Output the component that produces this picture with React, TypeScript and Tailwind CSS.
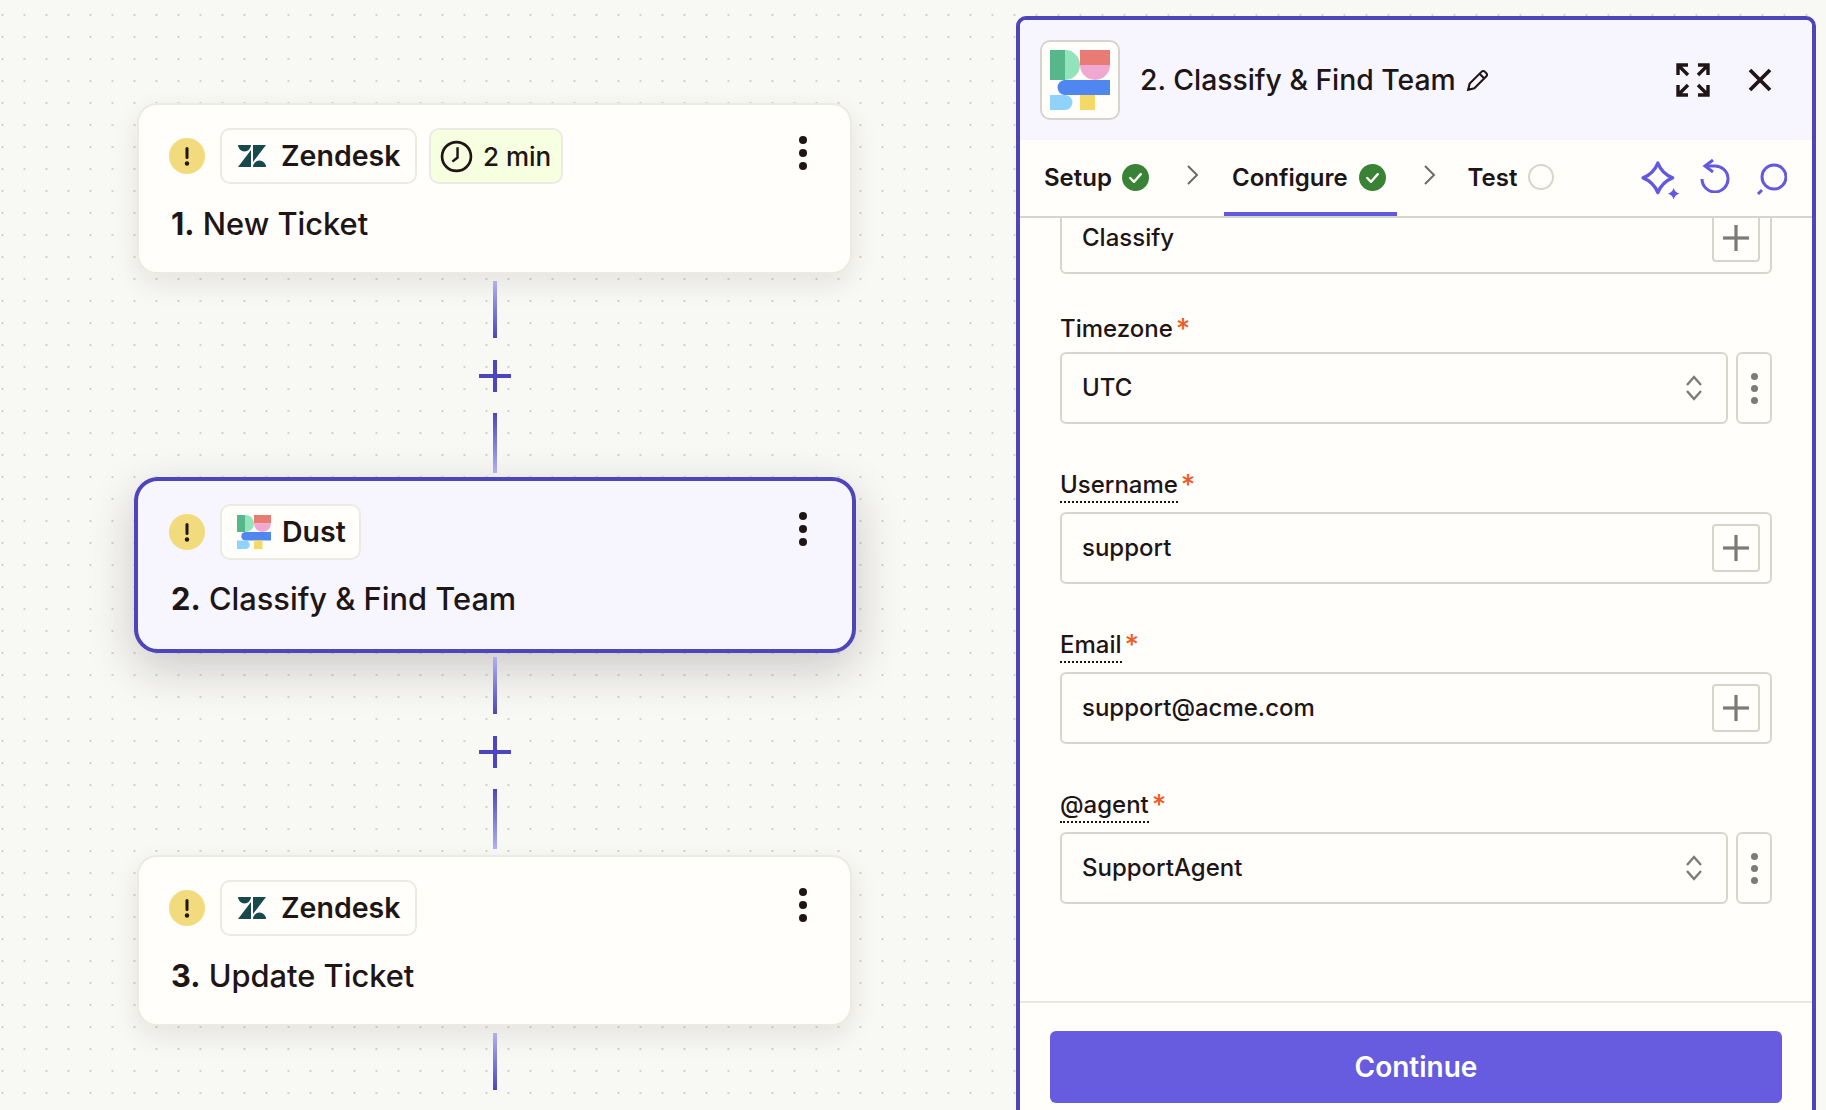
import { FC, ReactNode } from "react";

const DustLogo: FC<{ className?: string }> = ({ className }) => (
  <svg viewBox="0 0 4 4" className={className}>
    <rect x="0" y="0" width="1" height="2" fill="#56b88a" />
    <path d="M1 0a1 1 0 0 1 0 2z" fill="#92e4bb" />
    <rect x="2" y="0" width="2" height="1" fill="#e97b75" />
    <path d="M2 1h2a1 1 0 0 1-2 0z" fill="#efa9d0" />
    <path d="M1 2h3v1H1a.5.5 0 0 1 0-1z" fill="#4f86ef" />
    <path d="M0 3h1a.5.5 0 0 1 0 1H0z" fill="#8fd2fa" />
    <rect x="2" y="3" width="1" height="1" fill="#f6d867" />
  </svg>
);

const ZendeskLogo: FC = () => (
  <svg viewBox="0 0 28 22" className="h-[22px] w-[28px]" fill="#17494d">
    <path d="M0 0h13a6.5 6.5 0 0 1-13 0z" />
    <path d="M13 5v17H0z" />
    <path d="M15 17V0h13z" />
    <path d="M28 22H15a6.5 6.5 0 0 1 13 0z" />
  </svg>
);

const Warning: FC = () => (
  <div className="flex h-[36px] w-[36px] shrink-0 items-center justify-center rounded-full bg-[#f2db7c]">
    <svg viewBox="0 0 36 36" className="h-[36px] w-[36px]" fill="#201515">
      <rect x="16.5" y="9" width="3" height="12" rx="1.5" />
      <circle cx="18" cy="25.5" r="2.2" />
    </svg>
  </div>
);

const Chip: FC<{ children: ReactNode; className?: string }> = ({
  children,
  className,
}) => (
  <div
    className={`flex h-[56px] items-center rounded-[10px] border-2 border-[#ecebe3] ${className}`}
  >
    {children}
  </div>
);

const Clock: FC = () => (
  <svg
    viewBox="0 0 32 32"
    className="h-[33px] w-[33px]"
    fill="none"
    stroke="#201515"
    strokeWidth="2.6"
  >
    <circle cx="16" cy="16" r="14" />
    <path d="M17 7v10l-5 4" strokeWidth="2.4" />
  </svg>
);

const StepCard: FC<{
  number: string;
  title: string;
  app: ReactNode;
  selected?: boolean;
  extra?: ReactNode;
}> = ({ number, title, app, selected, extra }) => (
  <div
    className={
      selected
        ? "relative z-10 -mt-[3px] -mr-[4px] -mb-[4px] -ml-[3px] h-[176px] rounded-[24px] border-[4px] border-[#4f45bb] bg-[#f7f6fe] pt-[23px] pr-[32px] pl-[31px] shadow-[0_16px_48px_rgba(32,21,21,0.2)]"
        : "relative z-10 -my-[1px] h-[171px] rounded-[20px] border-2 border-[#ecebe3] bg-[#fffefb] pt-[23px] pr-[30px] pl-[30px] shadow-[0_10px_28px_rgba(32,21,21,0.09)]"
    }
  >
    <div className="flex items-center">
      <Warning />
      <div className="ml-[15px] flex items-center gap-[12px]">
        {app}
        {extra}
      </div>
      <div className="mt-[-6px] mr-[13px] ml-auto flex flex-col items-center gap-[5px]">
        <span className="h-[8px] w-[8px] rounded-full bg-[#201515]" />
        <span className="h-[8px] w-[8px] rounded-full bg-[#201515]" />
        <span className="h-[8px] w-[8px] rounded-full bg-[#201515]" />
      </div>
    </div>
    <div
      className={`ml-[2px] text-[30.8px] leading-[38px] font-medium text-[#201515] ${
        selected ? "mt-[20px]" : "mt-[21px]"
      }`}
    >
      <span className="font-bold">{number}</span> {title}
    </div>
  </div>
);

const Connector: FC<{ halo?: boolean }> = ({ halo }) => (
  <div className="relative z-20 flex h-[207px] flex-col items-center pt-[8px]">
    <div className="h-[57px] w-[4px] bg-linear-to-t from-[#4f45bb] to-[#b4aff0]" />
    <div className="relative mt-[22px] mb-[21px] h-[32px] w-[32px] shrink-0">
      {halo && (
        <div className="absolute -top-[14px] -left-[14px] h-[60px] w-[60px] rounded-full bg-[#f8f8f5]" />
      )}
      <div className="absolute top-[14px] left-0 h-[4px] w-[32px] bg-[#4f45bb]" />
      <div className="absolute top-0 left-[14px] h-[32px] w-[4px] bg-[#4f45bb]" />
    </div>
    <div className="h-[60px] w-[4px] bg-linear-to-b from-[#4f45bb] to-[#b4aff0]" />
  </div>
);

const CheckDot: FC = () => (
  <svg viewBox="0 0 28 28" className="h-[27px] w-[27px]">
    <circle cx="14" cy="14" r="14" fill="#3a8336" />
    <path
      d="M8.5 14.5l4 4 7-8"
      fill="none"
      stroke="#fffefb"
      strokeWidth="2.4"
      strokeLinecap="round"
      strokeLinejoin="round"
    />
  </svg>
);

const Chevron: FC = () => (
  <svg
    viewBox="0 0 14 22"
    className="h-[22px] w-[14px]"
    fill="none"
    stroke="#6b6b68"
    strokeWidth="2"
  >
    <path d="M2 2l9 9-9 9" />
  </svg>
);

const PlusBox: FC = () => (
  <div className="flex h-[48px] w-[48px] shrink-0 items-center justify-center rounded-[4px] border-2 border-[#d7d6cc] bg-[#fffefb]">
    <svg viewBox="0 0 24 24" className="h-[26px] w-[26px]" fill="#7c7b78">
      <rect x="0" y="10.5" width="24" height="3" />
      <rect x="10.5" y="0" width="3" height="24" />
    </svg>
  </div>
);

const Label: FC<{ text: string; dotted?: boolean }> = ({ text, dotted }) => (
  <div className="flex items-start text-[24px] leading-[30px] font-medium text-[#201515]">
    <span
      className={
        dotted ? "border-b-2 border-dotted border-[#201515] pb-[1px]" : ""
      }
    >
      {text}
    </span>
    <span className="ml-[3px] text-[28px] text-[#f15a24]">*</span>
  </div>
);

const TextField: FC<{ value: string; className?: string }> = ({
  value,
  className,
}) => (
  <div
    className={`flex h-[72px] items-center rounded-[6px] border-2 border-[#d7d6cc] bg-[#fffefb] pr-[10px] pl-[20px] text-[24px] font-medium text-[#201515] ${className}`}
  >
    <span>{value}</span>
    <div className="ml-auto">
      <PlusBox />
    </div>
  </div>
);

const SelectField: FC<{ value: string }> = ({ value }) => (
  <div className="flex gap-[8px]">
    <div className="flex h-[72px] w-[668px] items-center rounded-[6px] border-2 border-[#d7d6cc] bg-[#fffefb] pr-[23px] pl-[20px] text-[24px] font-medium text-[#201515]">
      <span>{value}</span>
      <svg
        viewBox="0 0 18 26"
        className="ml-auto h-[26px] w-[18px]"
        fill="none"
        stroke="#7c7b78"
        strokeWidth="2.4"
      >
        <path d="M2 10l7-8 7 8" />
        <path d="M2 16l7 8 7-8" />
      </svg>
    </div>
    <div className="flex h-[72px] w-[36px] flex-col items-center justify-center gap-[5px] rounded-[6px] border-2 border-[#d7d6cc] bg-[#fffefb]">
      <span className="h-[7px] w-[7px] rounded-full bg-[#7c7b78]" />
      <span className="h-[7px] w-[7px] rounded-full bg-[#7c7b78]" />
      <span className="h-[7px] w-[7px] rounded-full bg-[#7c7b78]" />
    </div>
  </div>
);

const ZendeskChip: FC = () => (
  <Chip className="w-[197px] gap-[15px] bg-[#fffefb] pl-[16px]">
    <ZendeskLogo />
    <span className="text-[28.5px] font-semibold text-[#201515]">Zendesk</span>
  </Chip>
);

export default function App() {
  return (
    <div className="flex h-[1110px] w-[1826px] overflow-hidden bg-[#f8f8f5] bg-[radial-gradient(#d3d3cc_1px,transparent_1.5px)] bg-[size:22px_22px] bg-[position:-8.5px_4px] font-[Inter,sans-serif]">
      <div className="w-[1016px] shrink-0 pt-[104px] pl-[137px]">
        <div className="w-[715px]">
          <StepCard
            number="1."
            title="New Ticket"
            app={<ZendeskChip />}
            extra={
              <Chip className="w-[134px] gap-[10px] bg-[#f6ffdf] pl-[9px]">
                <Clock />
                <span className="text-[26px] font-medium text-[#201515]">
                  2 min
                </span>
              </Chip>
            }
          />
          <Connector />
          <StepCard
            selected
            number="2."
            title="Classify & Find Team"
            app={
              <Chip className="w-[141px] gap-[11px] bg-[#fffefb] pl-[15px]">
                <DustLogo className="h-[34px] w-[34px]" />
                <span className="text-[28.5px] font-semibold text-[#201515]">
                  Dust
                </span>
              </Chip>
            }
          />
          <Connector halo />
          <StepCard number="3." title="Update Ticket" app={<ZendeskChip />} />
          <Connector />
        </div>
      </div>

      <div className="mt-[16px] flex h-[1110px] w-[800px] shrink-0 flex-col overflow-hidden rounded-t-[10px] border-[4px] border-b-0 border-[#4f45bb] bg-[#fffefb]">
        <div className="flex h-[120px] shrink-0 items-center bg-[#f7f6fe] pr-[40px] pl-[20px]">
          <div className="flex h-[80px] w-[80px] items-center justify-center rounded-[10px] border-2 border-[#d7d6cc] bg-[#fffefb]">
            <DustLogo className="h-[60px] w-[60px]" />
          </div>
          <span className="ml-[20px] text-[28.3px] font-medium text-[#201515]">
            2. Classify &amp; Find Team
          </span>
          <svg
            viewBox="0 0 24 24"
            className="ml-[9px] h-[25px] w-[25px]"
            fill="none"
            stroke="#201515"
            strokeWidth="2"
          >
            <path d="M3 21l1.5-6L16 3.5a2 2 0 0 1 3 0l1.5 1.5a2 2 0 0 1 0 3L9 19.5z" />
            <path d="M14 5.5l4.5 4.5" />
          </svg>
          <svg
            viewBox="0 0 34 34"
            className="ml-auto h-[34px] w-[34px]"
            fill="none"
            stroke="#201515"
            strokeWidth="3.4"
          >
            <path d="M2 12V2h10M2 2l10 10" />
            <path d="M32 12V2H22M32 2L22 12" />
            <path d="M2 22v10h10M2 32l10-10" />
            <path d="M32 22v10H22M32 32L22 22" />
          </svg>
          <svg
            viewBox="0 0 24 24"
            className="ml-[38px] h-[24px] w-[24px]"
            fill="none"
            stroke="#201515"
            strokeWidth="3.8"
          >
            <path d="M2 2l20 20M22 2L2 22" />
          </svg>
        </div>

        <div className="relative z-10 flex h-[78px] shrink-0 items-start border-b-2 border-[#d7d6cc] bg-[#fffefb] pt-[24px] pl-[24px] text-[24px] leading-[28px] font-semibold text-[#201515]">
          <span>Setup</span>
          <span className="ml-[10px]">
            <CheckDot />
          </span>
          <span className="ml-[37px]">
            <Chevron />
          </span>
          <div className="relative ml-[32px]">
            <span>Configure</span>
            <div className="absolute top-[48px] -right-[49px] -left-[8px] h-[4px] bg-[#6359de]" />
          </div>
          <span className="ml-[11px]">
            <CheckDot />
          </span>
          <span className="ml-[37px]">
            <Chevron />
          </span>
          <span className="ml-[31px]">Test</span>
          <span className="ml-[11px] h-[26px] w-[26px] rounded-full border-2 border-[#d7d6cc]" />
          <div className="ml-auto flex items-start pr-[25px]">
            <svg
              viewBox="0 0 38 38"
              className="-mt-[3px] h-[40px] w-[40px]"
              fill="none"
              stroke="#6359de"
              strokeWidth="3.2"
              strokeLinejoin="round"
            >
              <path d="M16 2Q20 12 30 16Q20 20 16 30Q12 20 2 16Q12 12 16 2z" />
              <path
                d="M31 25.5Q32 30 36.5 31Q32 32 31 36.5Q30 32 25.5 31Q30 30 31 25.5z"
                fill="#6359de"
                stroke="none"
              />
            </svg>
            <svg
              viewBox="0 0 30 34"
              className="-mt-[5px] ml-[19px] h-[34px] w-[30px]"
              fill="none"
              stroke="#6359de"
              strokeWidth="3"
            >
              <path d="M13 1L5 7l8 6" />
              <path d="M5 7h9a13 13 0 1 1-12 13" />
            </svg>
            <svg
              viewBox="0 0 32 32"
              className="-mt-[1px] ml-[25px] h-[32px] w-[32px]"
              fill="none"
              stroke="#6359de"
              strokeWidth="3"
            >
              <circle cx="19" cy="14" r="12" />
              <path d="M7 27l-4 4" />
            </svg>
          </div>
        </div>

        <div className="flex-1 overflow-hidden pr-[40px] pl-[40px]">
          <TextField value="Classify" className="-mt-[16px]" />
          <div className="mt-[40px]">
            <Label text="Timezone" />
          </div>
          <div className="mt-[8px]">
            <SelectField value="UTC" />
          </div>
          <div className="mt-[46px]">
            <Label text="Username" dotted />
          </div>
          <TextField value="support" className="mt-[9px]" />
          <div className="mt-[46px]">
            <Label text="Email" dotted />
          </div>
          <TextField value="support@acme.com" className="mt-[9px]" />
          <div className="mt-[46px]">
            <Label text="@agent" dotted />
          </div>
          <div className="mt-[9px]">
            <SelectField value="SupportAgent" />
          </div>
        </div>

        <div className="h-[125px] shrink-0 border-t-2 border-[#e8e8e2] px-[30px] pt-[28px]">
          <button className="h-[72px] w-[732px] rounded-[6px] bg-[#675bdf] text-[28px] font-semibold text-white">
            Continue
          </button>
        </div>
      </div>
    </div>
  );
}
